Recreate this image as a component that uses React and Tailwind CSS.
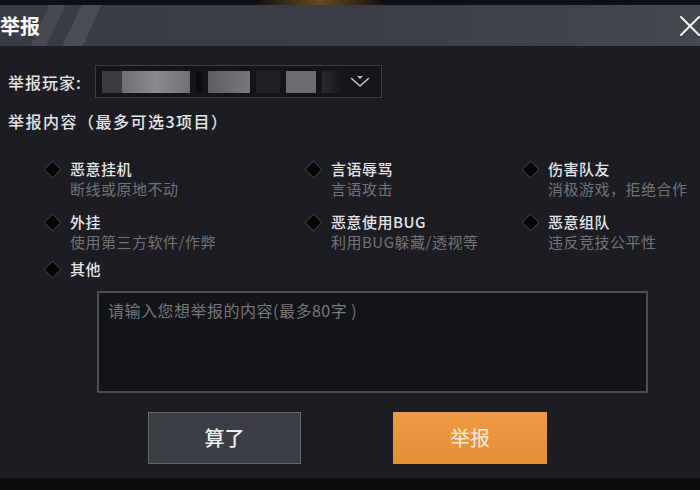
const options = [
  { title: "恶意挂机", sub: "断线或原地不动" },
  { title: "言语辱骂", sub: "言语攻击" },
  { title: "伤害队友", sub: "消极游戏，拒绝合作" },
  { title: "外挂", sub: "使用第三方软件/作弊" },
  { title: "恶意使用BUG", sub: "利用BUG躲藏/透视等" },
  { title: "恶意组队", sub: "违反竞技公平性" },
  { title: "其他", sub: "" },
];

const Diamond = () => (
  <span className="mt-[1px] flex h-[18px] w-[18px] shrink-0 items-center justify-center">
    <span className="block h-[13px] w-[13px] rotate-45 border border-[#404146] bg-[#050506]" />
  </span>
);

const Option = ({ title, sub, last }) => (
  <div className={`flex items-start gap-[9px] ${last ? "-mt-[6px]" : ""}`}>
    <Diamond />
    <div className="flex flex-col">
      <span className="whitespace-nowrap text-[15px] font-medium leading-[20px] tracking-[0.5px] text-[#e6e6e8]">{title}</span>
      {sub && (
        <span className="whitespace-nowrap text-[15px] leading-[20px] tracking-[0.5px] text-[#727378]">{sub}</span>
      )}
    </div>
  </div>
);

export default function App() {
  return (
    <div
      className="flex h-[490px] w-[700px] flex-col overflow-hidden bg-[#1c1d22] text-white"
      style={{ fontFamily: '"Noto Sans CJK SC", "Noto Sans", sans-serif' }}
    >
      {/* top strip */}
      <div className="relative h-[5px] shrink-0 bg-[#0f1012]">
        <div className="absolute left-[255px] top-0 h-[5px] w-[130px] bg-gradient-to-r from-transparent via-[#6a4a1e] to-transparent" />
      </div>

      {/* header */}
      <div className="relative flex h-[41px] shrink-0 items-center justify-between overflow-hidden bg-gradient-to-r from-[#383b42] via-[#3b3e45] to-[#44474e]">
        <div className="absolute left-[40px] top-0 h-full w-[16px] -skew-x-[25deg] bg-[#46494f]" />
        <div className="absolute left-[72px] top-0 h-full w-[20px] -skew-x-[25deg] bg-[#4a4d54]" />
        <span className="relative text-[20px] font-bold leading-none text-white">举报</span>
        <svg className="relative mr-[-1px]" width="22" height="22" viewBox="0 0 22 22">
          <path d="M2 2 L20 20 M20 2 L2 20" stroke="#f2f2f2" strokeWidth="2" strokeLinecap="round" />
        </svg>
      </div>

      {/* body */}
      <div className="flex flex-1 flex-col bg-[#1c1d22]">
        <div className="mt-[19px] flex items-center">
          <span className="ml-[8px] w-[87px] text-[16px] font-medium tracking-[1px] text-[#e4e4e6]">举报玩家:</span>
          <div className="flex h-[33px] w-[287px] items-center justify-between border border-[#3d3e43] bg-[#141519] pr-[10px]">
            <div className="flex h-full items-center gap-[6px] py-[6px] pl-[6px]">
              <span className="h-[22px] w-[20px] bg-[#3b3c41]" />
              <span className="-ml-[6px] h-[22px] w-[68px] bg-gradient-to-r from-[#6d6e72] via-[#8a8b8f] to-[#707175]" />
              <span className="h-[22px] w-[6px] bg-[#0c0c0e]" />
              <span className="h-[22px] w-[42px] bg-gradient-to-r from-[#5e5f63] to-[#77787c]" />
              <span className="h-[22px] w-[24px] bg-[#202125]" />
              <span className="h-[22px] w-[30px] bg-[#6c6d71]" />
              <span className="h-[22px] w-[20px] bg-gradient-to-r from-[#2c2d31] to-transparent" />
            </div>
            <svg width="22" height="14" viewBox="0 0 22 14">
              <path d="M2 3 L11 11 L20 3" fill="none" stroke="#bdbdc0" strokeWidth="1.6" />
              <path d="M8 1 L14 1 L11 4 Z" fill="#bdbdc0" />
            </svg>
          </div>
        </div>

        <div className="ml-[8px] mt-[11px] text-[16px] font-medium tracking-[1.5px] text-[#e4e4e6]">举报内容（最多可选3项目）</div>

        <div className="ml-[43px] mt-[26px] grid grid-cols-[261px_217px_1fr] gap-y-[13px]">
          {options.map((o, i) => (
            <Option key={o.title} {...o} last={i === options.length - 1} />
          ))}
        </div>

        <div className="ml-[97px] mt-[12px] h-[102px] w-[551px] border-2 border-[#4d4e53] bg-[#131418] px-[9px] py-[5px]">
          <span className="text-[16px] tracking-[0.5px] text-[#76777c]">请输入您想举报的内容(最多80字 )</span>
        </div>

        <div className="mt-[19px] flex">
          <button className="ml-[148px] flex h-[52px] w-[153px] items-center justify-center border border-[#66686e] bg-[#3c3e46] text-[20px] font-medium text-[#eeeeee]">
            算了
          </button>
          <button className="ml-[92px] flex h-[52px] w-[154px] items-center justify-center bg-gradient-to-b from-[#ef9a44] to-[#e58d35] text-[20px] text-[#fdeedd]">
            举报
          </button>
        </div>
      </div>

      {/* bottom strip */}
      <div className="h-[12px] shrink-0 bg-[#0d0d0f]" />
    </div>
  );
}
